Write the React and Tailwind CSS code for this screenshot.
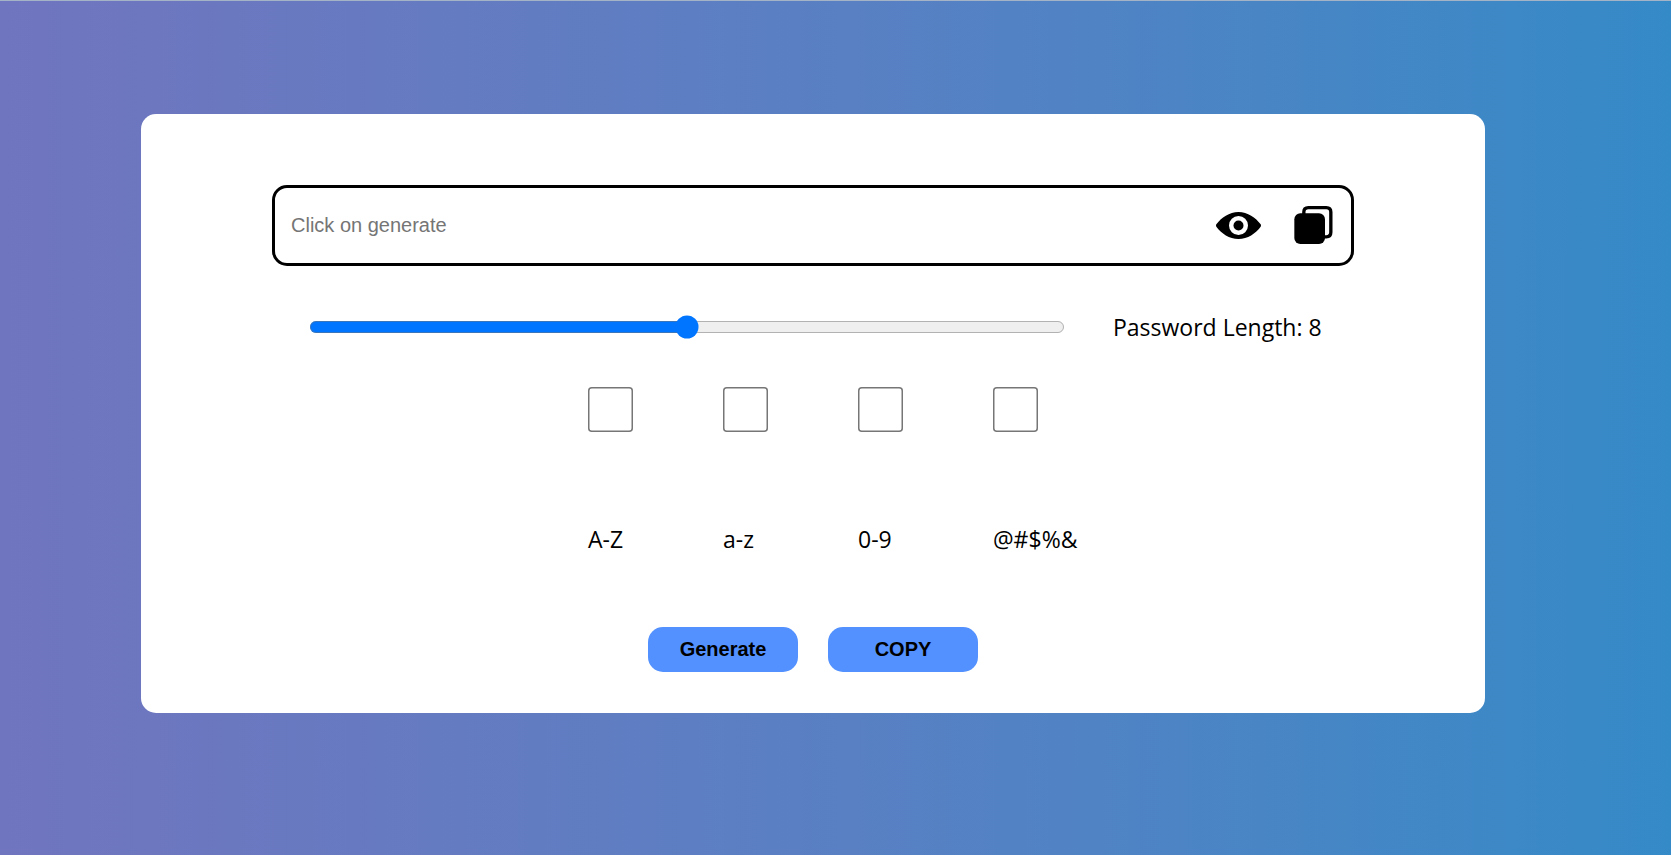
import { useState } from "react";

const SETS = [
  { id: "upper", label: "A-Z", chars: "ABCDEFGHIJKLMNOPQRSTUVWXYZ" },
  { id: "lower", label: "a-z", chars: "abcdefghijklmnopqrstuvwxyz" },
  { id: "digits", label: "0-9", chars: "0123456789" },
  { id: "symbols", label: "@#$%&", chars: "@#$%&" },
];

function EyeIcon() {
  return (
    <svg viewBox="0 0 135 81" className="h-[27px] w-[45px]" aria-hidden="true">
      <path
        fillRule="evenodd"
        d="M1 37C16 17 40 0 67.500 0S119 17 134 37Q136 40.500 134 44C119 64 95 81 67.500 81S16 64 1 44Q-1 40.500 1 37ZM67.500 12a28.500 28.500 0 1 0 0 57a28.500 28.500 0 1 0 0-57Z"
      />
      <circle cx="67.5" cy="40.5" r="15" />
    </svg>
  );
}

function CopyIcon() {
  return (
    <svg viewBox="0 0 117 117" className="size-[39px]" aria-hidden="true">
      <rect x="1" y="22" width="92" height="92" rx="18" />
      <path
        fill="none"
        stroke="black"
        strokeWidth="10"
        d="M29.500 25V18Q29.500 5 43 5H97Q110.500 5 110.500 18V79Q110.500 92.500 97 92.500H90"
      />
    </svg>
  );
}

const button =
  "h-[45px] w-[150px] cursor-pointer rounded-[15px] bg-[#5291ff] pb-0.5 font-['Liberation_Sans',Arial,sans-serif] text-[20px] font-bold";

export default function App() {
  const [password, setPassword] = useState("");
  const [visible, setVisible] = useState(true);
  const [length, setLength] = useState(8);
  const [enabled, setEnabled] = useState({});

  const generate = () => {
    const pool = SETS.filter((s) => enabled[s.id]).map((s) => s.chars).join("");
    if (!pool) return;
    setPassword(
      Array.from({ length }, () => pool[Math.floor(Math.random() * pool.length)]).join("")
    );
  };
  const copy = () => navigator.clipboard?.writeText(password);

  return (
    <main className="flex min-h-screen flex-col border-t border-[#a4b3c6] bg-linear-to-r from-[#7075bf] to-[#348ac7] font-['Open_Sans','Noto_Sans',sans-serif] text-[23px] leading-8 text-black">
      <section className="mt-[113px] mr-[186px] ml-[141px] rounded-[15px] bg-white pt-[71px] pb-[41px]">
        <div className="mx-[131px] flex h-[81px] items-center rounded-[15px] border-3 border-black pr-[18px] pl-4">
          <input
            type={visible ? "text" : "password"}
            aria-label="Password"
            placeholder="Click on generate"
            value={password}
            readOnly
            className="min-w-0 flex-1 pb-0.5 font-['Liberation_Sans',Arial,sans-serif] text-[20px] outline-none placeholder:text-[#757575]"
          />
          <div className="flex items-center gap-[33px]">
            <button type="button" aria-label="Show password" onClick={() => setVisible(!visible)}>
              <EyeIcon />
            </button>
            <button type="button" aria-label="Copy password" onClick={copy}>
              <CopyIcon />
            </button>
          </div>
        </div>

        <div className="mx-[168px] mt-[45px] flex items-center gap-12">
          <input
            id="length"
            type="range"
            min="0"
            max="16"
            value={length}
            onChange={(e) => setLength(Number(e.target.value))}
            className="min-w-0 flex-1 [zoom:1.5]"
          />
          <label htmlFor="length" className="w-[204px] whitespace-nowrap">
            Password Length: {length}
          </label>
        </div>

        <div className="mt-11 flex justify-center gap-[90px]">
          {SETS.map((s) => (
            <div key={s.id} className="flex w-[45px] flex-col gap-[91px]">
              <input
                id={s.id}
                type="checkbox"
                checked={!!enabled[s.id]}
                onChange={(e) => setEnabled({ ...enabled, [s.id]: e.target.checked })}
                className="size-[30px] [zoom:1.5]"
              />
              <label htmlFor={s.id} className="whitespace-nowrap">
                {s.label}
              </label>
            </div>
          ))}
        </div>

        <div className="mt-[72px] flex justify-center gap-[30px]">
          <button type="button" onClick={generate} className={button}>
            Generate
          </button>
          <button type="button" onClick={copy} className={button}>
            COPY
          </button>
        </div>
      </section>
    </main>
  );
}
